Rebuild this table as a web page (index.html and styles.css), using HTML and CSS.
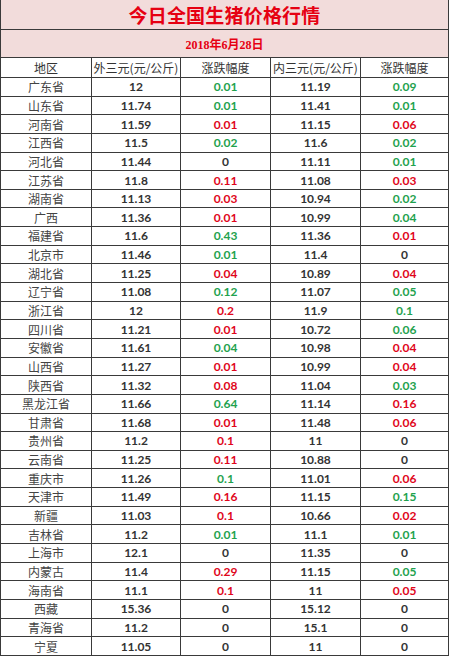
FILE: index.html
```html
<!DOCTYPE html>
<html lang="zh-CN">
<head>
<meta charset="utf-8">
<title>今日全国生猪价格行情</title>
<link rel="stylesheet" href="styles.css">
</head>
<body>
<div class="sheet">
  <div class="title">今日全国生猪价格行情</div>
  <div class="date">2018年6月28日</div>
  <div class="hd">地区</div><div class="hd">外三元(元/公斤)</div><div class="hd">涨跌幅度</div><div class="hd">内三元(元/公斤)</div><div class="hd">涨跌幅度</div>

  <div class="rg">广东省</div><div class="n">12</div><div class="n g">0.01</div><div class="n">11.19</div><div class="n g">0.09</div>
  <div class="rg">山东省</div><div class="n">11.74</div><div class="n g">0.01</div><div class="n">11.41</div><div class="n g">0.01</div>
  <div class="rg">河南省</div><div class="n">11.59</div><div class="n r">0.01</div><div class="n">11.15</div><div class="n r">0.06</div>
  <div class="rg">江西省</div><div class="n">11.5</div><div class="n g">0.02</div><div class="n">11.6</div><div class="n g">0.02</div>
  <div class="rg">河北省</div><div class="n">11.44</div><div class="n">0</div><div class="n">11.11</div><div class="n g">0.01</div>
  <div class="rg">江苏省</div><div class="n">11.8</div><div class="n r">0.11</div><div class="n">11.08</div><div class="n r">0.03</div>
  <div class="rg">湖南省</div><div class="n">11.13</div><div class="n r">0.03</div><div class="n">10.94</div><div class="n g">0.02</div>
  <div class="rg">广西</div><div class="n">11.36</div><div class="n r">0.01</div><div class="n">10.99</div><div class="n g">0.04</div>
  <div class="rg">福建省</div><div class="n">11.6</div><div class="n g">0.43</div><div class="n">11.36</div><div class="n r">0.01</div>
  <div class="rg">北京市</div><div class="n">11.46</div><div class="n g">0.01</div><div class="n">11.4</div><div class="n">0</div>
  <div class="rg">湖北省</div><div class="n">11.25</div><div class="n r">0.04</div><div class="n">10.89</div><div class="n r">0.04</div>
  <div class="rg">辽宁省</div><div class="n">11.08</div><div class="n g">0.12</div><div class="n">11.07</div><div class="n g">0.05</div>
  <div class="rg">浙江省</div><div class="n">12</div><div class="n r">0.2</div><div class="n">11.9</div><div class="n g">0.1</div>
  <div class="rg">四川省</div><div class="n">11.21</div><div class="n r">0.01</div><div class="n">10.72</div><div class="n g">0.06</div>
  <div class="rg">安徽省</div><div class="n">11.61</div><div class="n g">0.04</div><div class="n">10.98</div><div class="n r">0.04</div>
  <div class="rg">山西省</div><div class="n">11.27</div><div class="n r">0.01</div><div class="n">10.99</div><div class="n r">0.04</div>
  <div class="rg">陕西省</div><div class="n">11.32</div><div class="n r">0.08</div><div class="n">11.04</div><div class="n g">0.03</div>
  <div class="rg">黑龙江省</div><div class="n">11.66</div><div class="n g">0.64</div><div class="n">11.14</div><div class="n r">0.16</div>
  <div class="rg">甘肃省</div><div class="n">11.68</div><div class="n r">0.01</div><div class="n">11.48</div><div class="n r">0.06</div>
  <div class="rg">贵州省</div><div class="n">11.2</div><div class="n r">0.1</div><div class="n">11</div><div class="n">0</div>
  <div class="rg">云南省</div><div class="n">11.25</div><div class="n r">0.11</div><div class="n">10.88</div><div class="n">0</div>
  <div class="rg">重庆市</div><div class="n">11.26</div><div class="n g">0.1</div><div class="n">11.01</div><div class="n r">0.06</div>
  <div class="rg">天津市</div><div class="n">11.49</div><div class="n r">0.16</div><div class="n">11.15</div><div class="n g">0.15</div>
  <div class="rg">新疆</div><div class="n">11.03</div><div class="n r">0.1</div><div class="n">10.66</div><div class="n r">0.02</div>
  <div class="rg">吉林省</div><div class="n">11.2</div><div class="n g">0.01</div><div class="n">11.1</div><div class="n g">0.01</div>
  <div class="rg">上海市</div><div class="n">12.1</div><div class="n">0</div><div class="n">11.35</div><div class="n">0</div>
  <div class="rg">内蒙古</div><div class="n">11.4</div><div class="n r">0.29</div><div class="n">11.15</div><div class="n g">0.05</div>
  <div class="rg">海南省</div><div class="n">11.1</div><div class="n r">0.1</div><div class="n">11</div><div class="n r">0.05</div>
  <div class="rg">西藏</div><div class="n">15.36</div><div class="n">0</div><div class="n">15.12</div><div class="n">0</div>
  <div class="rg">青海省</div><div class="n">11.2</div><div class="n">0</div><div class="n">15.1</div><div class="n">0</div>
  <div class="rg">宁夏</div><div class="n">11.05</div><div class="n">0</div><div class="n">11</div><div class="n">0</div>
</div>
</body>
</html>
```

FILE: styles.css
```css
html, body {
  margin: 0;
  padding: 0;
  background: #ffffff;
}

.sheet {
  display: grid;
  grid-template-columns: 91px 89px 90px 90px 88px;
  grid-template-rows: 30px 28px 20px repeat(31, 18.65px);
  width: 448px;
  border-left: 1px solid #3a3a3a;
  font-family: "Noto Sans CJK SC", sans-serif;
  color: #3a3a3a;
}

.sheet > div {
  box-sizing: border-box;
  border-right: 1px solid #3a3a3a;
  border-bottom: 1px solid #3a3a3a;
  display: flex;
  align-items: center;
  justify-content: center;
  white-space: nowrap;
  overflow: hidden;
}

.title {
  grid-column: 1 / -1;
  background: #f2dcdb;
  color: #e60012;
  font-size: 19px;
  font-weight: 700;
  letter-spacing: 0.2px;
}

.date {
  grid-column: 1 / -1;
  background: #f2dcdb;
  color: #e60012;
  font-family: "Liberation Serif", "Noto Sans CJK SC", serif;
  font-size: 12px;
  font-weight: 700;
  padding-top: 1px;
}

.hd {
  font-size: 12px;
  color: #333333;
}

.rg {
  font-size: 12px;
  color: #444444;
}

.n {
  font-family: Lato, "Liberation Sans", sans-serif;
  font-weight: 700;
  font-size: 12px;
  color: #333333;
}

.n.g {
  color: #1fa24e;
}

.n.r {
  color: #e0061b;
}
```
